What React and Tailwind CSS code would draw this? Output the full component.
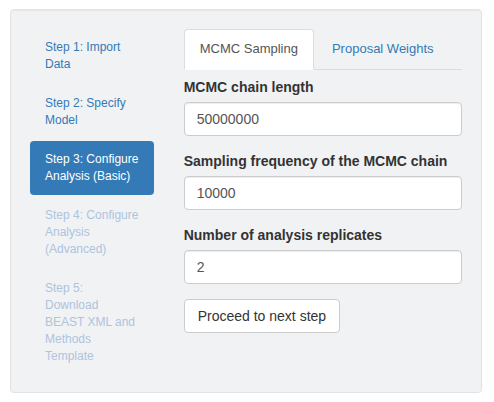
export default function App() {
  const font = { fontFamily: '"Liberation Sans", Arial, Helvetica, sans-serif' };
  return (
    <div className="w-[494px] h-[402px] bg-white pt-[9px] pl-[10px]" style={font}>
      <div className="w-[472px] h-[384px] bg-[#f1f2f4] border border-[#e3e3e3] rounded-[4px] shadow-[inset_0_1px_1px_rgba(0,0,0,0.05)] p-[19px] flex gap-[30px]">
        <ul className="w-[124px] flex flex-col gap-[2px] text-[12px] leading-[17px]">
          <li className="px-[15px] py-[10px] rounded-[4px] text-[#337ab7]">Step 1: Import Data</li>
          <li className="px-[15px] py-[10px] rounded-[4px] text-[#337ab7]">Step 2: Specify Model</li>
          <li className="px-[15px] py-[10px] rounded-[4px] bg-[#337ab7] text-white">Step 3: Configure Analysis (Basic)</li>
          <li className="px-[15px] py-[10px] rounded-[4px] text-[#adc4de]">Step 4: Configure Analysis (Advanced)</li>
          <li className="px-[15px] py-[10px] rounded-[4px] text-[#adc4de]">Step 5: Download BEAST XML and Methods Template</li>
        </ul>
        <div className="w-[279px] flex flex-col">
          <div className="flex border-b border-[#ddd] text-[13px] leading-[18px]">
            <div className="px-[15px] py-[10px] bg-white border border-[#ddd] border-b-transparent rounded-t-[4px] text-[#555] -mb-px">MCMC Sampling</div>
            <div className="ml-[2px] px-[15px] py-[10px] border border-transparent text-[#337ab7]">Proposal Weights</div>
          </div>
          <div className="pt-[7px] flex flex-col text-[14px] text-[#333]">
            <label className="font-bold leading-[20px] mb-[5px]">MCMC chain length</label>
            <div className="h-[34px] bg-white border border-[#ccc] rounded-[4px] px-[12px] flex items-center shadow-[inset_0_1px_1px_rgba(0,0,0,0.075)] text-[#555] mb-[15px]">50000000</div>
            <label className="font-bold leading-[20px] mb-[5px]">Sampling frequency of the MCMC chain</label>
            <div className="h-[34px] bg-white border border-[#ccc] rounded-[4px] px-[12px] flex items-center shadow-[inset_0_1px_1px_rgba(0,0,0,0.075)] text-[#555] mb-[15px]">10000</div>
            <label className="font-bold leading-[20px] mb-[5px]">Number of analysis replicates</label>
            <div className="h-[34px] bg-white border border-[#ccc] rounded-[4px] px-[12px] flex items-center shadow-[inset_0_1px_1px_rgba(0,0,0,0.075)] text-[#555] mb-[15px]">2</div>
            <button className="self-start h-[34px] bg-white border border-[#ccc] rounded-[4px] px-[13px] text-[#333] leading-[20px]">Proceed to next step</button>
          </div>
        </div>
      </div>
    </div>
  );
}
